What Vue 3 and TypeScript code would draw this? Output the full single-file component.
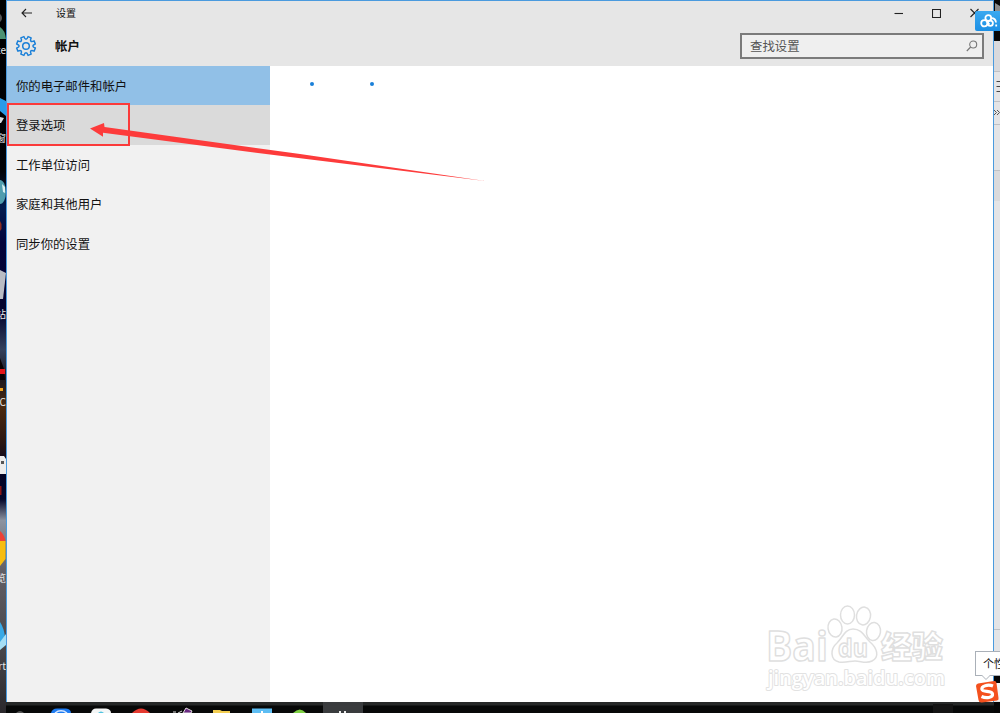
<template>
  <div class="desktop">
    <!-- Desktop strips that show on both sides of the window -->
    <svg class="strip strip-left" width="6" height="713" viewBox="0 0 6 713">
      <defs>
        <linearGradient id="wallpaper" x1="0" y1="0" x2="0" y2="1">
          <stop offset="0" stop-color="#000000" />
          <stop offset="0.24" stop-color="#020308" />
          <stop offset="0.29" stop-color="#031c50" />
          <stop offset="0.34" stop-color="#03033c" />
          <stop offset="0.44" stop-color="#05052f" />
          <stop offset="0.49" stop-color="#33405c" />
          <stop offset="0.53" stop-color="#1c1820" />
          <stop offset="0.57" stop-color="#4b2a10" />
          <stop offset="0.62" stop-color="#2b1712" />
          <stop offset="0.66" stop-color="#030324" />
          <stop offset="0.7" stop-color="#04062a" />
          <stop offset="0.73" stop-color="#8c93a0" />
          <stop offset="0.8" stop-color="#625f66" />
          <stop offset="0.9" stop-color="#4b484c" />
          <stop offset="1" stop-color="#2a282c" />
        </linearGradient>
      </defs>
      <rect width="6" height="713" fill="url(#wallpaper)" />
      <circle cx="-3" cy="18" r="5" fill="#555" />
      <path d="M0 27 Q5 30 6 39 H0Z" fill="#4c9272" />
      <path d="M0 98 L6 101 V116 L0 111Z" fill="#299be8" />
      <path d="M0 117 L4 118 L1 123 H0Z" fill="#d8dde2" />
      <ellipse cx="0" cy="192" rx="6" ry="12" fill="#4f9dae" />
      <path d="M2 184 L5 187 V193 L3 192Z" fill="#d9f0f2" />
      <path d="M0 221 L1.5 224 V229 L0 231Z" fill="#8c2b20" />
      <path d="M0 270 L6 273 L3 299 H0Z" fill="#b9bcc4" />
      <path d="M0 358 L4 369 L5 380 H0Z" fill="#0a0204" />
      <rect y="369" width="5" height="5" fill="#e3161a" />
      <rect y="388" width="3" height="3" fill="#f1a21b" />
      <path d="M0 456 H4 L6 459 V474 H0Z" fill="#ececec" />
      <rect x="1" y="461" width="3" height="3" fill="#555" />
      <rect y="486" width="1.5" height="9" fill="#8a1513" />
      <path d="M0 531 Q4 534 5.5 541 H0Z" fill="#ee4136" />
      <path d="M0 541 H5.5 V559 L0 566Z" fill="#f6bd11" />
      <path d="M0 622 Q4 628 5 637 L0 650Z" fill="#39a9e6" />
      <path d="M0 642 L6 634 V645 L0 650Z" fill="#a5def5" />
    </svg>
    <span
      v-for="label in iconLabels"
      :key="label.top"
      class="icon-label"
      :style="{ top: label.top + 'px' }"
    >{{ label.text }}</span>

    <svg class="strip strip-right" width="6" height="713" viewBox="0 0 6 713">
      <rect width="6" height="713" fill="#e4e4e6" />
      <rect width="6" height="41" fill="#070707" />
      <path d="M1 3 L6 6 V11 H1Z" fill="#8b8b8b" />
      <rect y="41" width="6" height="30" fill="#d9d9dc" />
      <path d="M0 71.5H6M0 101.5H6M0 124.5H6M0 170.5H6M0 629.5H6" stroke="#bfc1c5" />
      <path d="M2.5 81.5H6M2.5 86.5H6M2.5 91.5H6" stroke="#444" />
      <path d="M0 110 L2.5 112.5 L0 115M3 110 L5.5 112.5 L3 115" fill="none" stroke="#555" />
      <rect y="171" width="6" height="30" fill="#dadadc" />
      <rect y="676" width="6" height="7" fill="#050505" />
      <rect y="683" width="6" height="18" fill="#f6f6f6" />
      <rect y="702" width="6" height="11" fill="#050505" />
    </svg>

    <div class="window">
      <header class="window-header">
        <div class="title-bar">
          <svg class="back-icon" width="12" height="10" viewBox="0 0 12 10">
            <path d="M11 5H1M5 1L1 5L5 9" />
          </svg>
          <span class="window-title">设置</span>
          <div class="window-controls">
            <svg width="9" height="10" viewBox="0 0 9 10"><path d="M0.5 5.5H9" /></svg>
            <svg width="9" height="10" viewBox="0 0 9 10"><path d="M0.5 1.5H8.5V9.5H0.5Z" /></svg>
            <svg width="9" height="10" viewBox="0 0 9 10"><path d="M0.5 1L8.5 9M8.5 1L0.5 9" /></svg>
          </div>
        </div>
        <div class="page-bar">
          <svg class="gear-icon" width="22" height="22" viewBox="-11 -11 22 22">
            <path :d="gearPath" />
            <circle r="3.3" />
          </svg>
          <span class="page-title">帐户</span>
          <div class="search-box">
            <span>查找设置</span>
            <svg width="12" height="12" viewBox="0 0 12 12">
              <circle cx="7.2" cy="4.5" r="3.5" />
              <path d="M4.7 7L0.8 11" />
            </svg>
          </div>
        </div>
      </header>

      <div class="window-body">
        <nav class="sidebar">
          <div
            v-for="item in menuItems"
            :key="item.label"
            class="menu-item"
            :class="item.state"
          >{{ item.label }}</div>
        </nav>
        <main class="content">
          <i class="loading-dot"></i>
          <i class="loading-dot"></i>
        </main>
      </div>
    </div>

    <footer class="taskbar">
      <svg width="1000" height="11" viewBox="0 0 1000 11">
        <rect x="6" width="988" height="3.5" fill="#262828" />
        <rect x="323" width="40" height="11" fill="#3a3c3e" />
        <rect x="933" y="2" width="20" height="9" fill="#141414" />
        <path d="M16 11 Q20 7 24 11Z" fill="#555" />
        <path d="M51 11 Q52 6.5 57 6.5 H66 Q71 7 71 11Z" fill="#1e7cf2" />
        <path d="M55 11 Q61 6.5 67 11" fill="none" stroke="#dceaff" stroke-width="1.5" />
        <path d="M91 11 Q92 6.5 96 6.5 H106 Q111 7 111 11Z" fill="#f4f6f6" />
        <path d="M98 11 Q101 8 104 11Z" fill="#4ec3e0" />
        <path d="M132 11 Q141 2 150 11Z" fill="#e53a30" />
        <path d="M173 10 H176M178 11 L182 9" stroke="#ddd" />
        <path d="M183 11 L186 6 L192 9 L191 11Z" fill="#6b2a83" stroke="#ddd" />
        <path d="M213 11 V8 H220 L222 9 H230 V11Z" fill="#f2cd50" />
        <rect x="252" y="6.5" width="20" height="5" fill="#5dbdf3" />
        <path d="M262 9V11" stroke="#fff" stroke-width="2" />
        <path d="M293 11 Q300 4 306 11Z" fill="#7ed044" />
        <path d="M340 9V11M345 9V11" stroke="#eee" stroke-width="2" />
      </svg>
    </footer>

    <!-- Red marker around the sign-in option and the arrow to it -->
    <div class="marker-box"></div>
    <svg class="marker-arrow" width="400" height="70" viewBox="88 118 400 70">
      <path d="M90 128.5L104 123L104.5 127L300 154L485 181L280 155.8L103 132.7L103 136.7Z" />
    </svg>

    <svg class="watermark" width="190" height="95" viewBox="762 600 190 95">
      <g class="watermark-shape">
        <text x="766" y="661" font-size="41" font-weight="700" textLength="62" lengthAdjust="spacingAndGlyphs">Bai</text>
        <ellipse cx="835" cy="628" rx="7" ry="9" transform="rotate(-8 835 628)" />
        <ellipse cx="847.5" cy="615" rx="7" ry="9" />
        <ellipse cx="863.5" cy="616" rx="7" ry="9" transform="rotate(10 863.5 616)" />
        <ellipse cx="873.5" cy="631.5" rx="7" ry="9" transform="rotate(8 873.5 631.5)" />
        <path d="M853 629C845 629 843 637 837 643C830 649 830 660 839 662C846 663 850 661 855 661C861 661 866 664 872 661C880 657 877 648 870 642C864 636 862 629 853 629Z" />
        <text x="838" y="657" font-size="25" font-weight="700" textLength="30" lengthAdjust="spacingAndGlyphs">du</text>
        <text class="watermark-cjk" x="881" y="658" font-size="31" font-weight="900" textLength="62">经验</text>
        <text class="watermark-url" x="768" y="685" font-size="20.5" textLength="177" lengthAdjust="spacingAndGlyphs">jingyan.baidu.com</text>
      </g>
    </svg>

    <div class="cloud-badge">
      <svg width="18" height="14" viewBox="0 0 18 14">
        <circle cx="4.3" cy="9.3" r="3.1" />
        <circle cx="8.3" cy="4" r="2.9" />
        <path d="M6.5 6.8L9.5 10.5" />
        <circle cx="10.3" cy="9.3" r="2.6" />
        <path d="M11 4.2Q15.500 4 16 8.5M16.200 10.500V12.500" />
      </svg>
    </div>

    <div class="ime-tip">个性</div>
    <svg class="ime-pointer" width="10" height="6" viewBox="0 0 10 6">
      <path d="M0.5 0L5 4.5L9.5 0" />
    </svg>
    <svg class="ime-logo" width="25" height="25" viewBox="0 0 25 25">
      <path d="M1 6Q1 4 3 3.5L19 1Q21 0.5 21.5 3L23.5 18Q24 20 22 20.5L7 22.5Q4 23 3.5 20Z" fill="#f4511e" />
      <path d="M18 6C13 4 6 6 7 9.5C8 12.5 17 10 17.5 14C18 18 11 18.5 6.5 16.5" fill="none" stroke="#fff" stroke-width="3.2" />
    </svg>
  </div>
</template>

<script setup lang="ts">
import { computed } from 'vue'

interface MenuItem {
  label: string
  state?: 'is-active' | 'is-hover'
}

interface IconLabel {
  text: string
  top: number
}

const menuItems: MenuItem[] = [
  { label: '你的电子邮件和帐户', state: 'is-active' },
  { label: '登录选项', state: 'is-hover' },
  { label: '工作单位访问' },
  { label: '家庭和其他用户' },
  { label: '同步你的设置' }
]

// Only the last few pixels of each desktop icon name are visible
const iconLabels: IconLabel[] = [
  { text: 'te', top: 43 },
  { text: '窗', top: 131 },
  { text: '站', top: 307 },
  { text: 'C', top: 395 },
  { text: '览', top: 571 },
  { text: 'rt', top: 659 }
]

const polar = (radius: number, degrees: number) => {
  const angle = (degrees * Math.PI) / 180
  return `${(radius * Math.cos(angle)).toFixed(2)} ${(radius * Math.sin(angle)).toFixed(2)}`
}

// Eight teeth with rounded valleys between them
const gearPath = computed(() => {
  let d = ''
  for (let i = 0; i < 8; i++) {
    const mid = i * 45 + 22.5
    d += `${i === 0 ? 'M' : 'L'}${polar(9.6, mid - 10)}L${polar(9.6, mid + 10)}`
    d += `C${polar(6.1, mid + 13)} ${polar(6.1, mid + 32)} ${polar(9.6, mid + 35)}`
  }
  return d + 'Z'
})
</script>

<style>
body {
  margin: 0;
  overflow: hidden;
}
</style>

<style scoped>
.desktop {
  position: relative;
  width: 1000px;
  height: 713px;
  overflow: hidden;
  background: #050505;
  font-family: "Noto Sans CJK SC", sans-serif;
  color: #111;
}

.strip {
  position: absolute;
  top: 0;
}

.strip-left {
  left: 0;
}

.strip-right {
  right: 0;
}

.icon-label {
  position: absolute;
  right: 994px;
  font-size: 10px;
  line-height: 14px;
  color: #e6e6e6;
  white-space: nowrap;
}

.window {
  position: relative;
  box-sizing: border-box;
  display: flex;
  flex-direction: column;
  height: 702px;
  margin: 0 6px;
  border: 1px solid #4a9ade;
  border-bottom: none;
  background: #fff;
}

.window-header {
  height: 65px;
  background: #e6e6e6;
}

.title-bar {
  display: flex;
  align-items: center;
  height: 24px;
  padding: 0 14px;
}

.back-icon,
.window-controls svg {
  fill: none;
  stroke: #222;
  stroke-width: 1.1;
}

.window-title {
  margin-left: 23px;
  font-size: 10px;
  line-height: 24px;
}

.window-controls {
  display: flex;
  gap: 29px;
  margin-left: auto;
}

.page-bar {
  display: flex;
  align-items: center;
  height: 41px;
  padding: 0 9px 0 8px;
}

.gear-icon {
  fill: none;
  stroke: #1b80d8;
  stroke-width: 1.5;
  stroke-linejoin: round;
}

.page-title {
  margin-left: 18px;
  font-size: 12.4px;
  font-weight: 700;
}

.search-box {
  box-sizing: border-box;
  display: flex;
  align-items: center;
  justify-content: space-between;
  width: 244px;
  height: 26px;
  margin-left: auto;
  padding: 0 4px 0 8px;
  border: 2px solid #7b7b7b;
  background: #efefef;
  font-size: 12.4px;
  line-height: 20px;
  color: #555;
}

.search-box svg {
  fill: none;
  stroke: #777;
  stroke-width: 1.1;
}

.window-body {
  flex: 1;
  display: flex;
}

.sidebar {
  width: 263px;
  background: #f1f1f1;
}

.menu-item {
  height: 39.5px;
  padding-left: 9px;
  font-size: 12.35px;
  line-height: 40px;
}

.menu-item.is-active {
  height: 39.3px;
  background: #91c0e7;
}

.menu-item.is-hover {
  background: #dadada;
}

.content {
  flex: 1;
  display: flex;
  gap: 56px;
  padding: 16px 0 0 40px;
}

.loading-dot {
  width: 4px;
  height: 4px;
  border-radius: 50%;
  background: #1a80d9;
}

.taskbar {
  height: 11px;
  background: #070808;
}

.taskbar svg {
  display: block;
}

.marker-box {
  position: absolute;
  box-sizing: border-box;
  top: 103px;
  left: 7px;
  width: 123px;
  height: 42.5px;
  border: 2px solid #fb3a3a;
}

.marker-arrow {
  position: absolute;
  top: 118px;
  left: 88px;
  fill: #fd3b3b;
}

.watermark {
  position: absolute;
  top: 600px;
  left: 762px;
  font-family: "Open Sans", "Noto Sans", sans-serif;
}

.watermark-shape {
  fill: #fff;
  stroke: #dfdfdf;
  stroke-width: 1.5;
  stroke-linejoin: round;
}

.watermark-cjk {
  font-family: "Noto Sans CJK SC", sans-serif;
}

.watermark-url {
  font-weight: 600;
  stroke: #e2e2e2;
  stroke-width: 2;
  paint-order: stroke;
}

.cloud-badge {
  position: absolute;
  top: 11px;
  left: 975px;
  display: flex;
  align-items: center;
  justify-content: center;
  width: 27px;
  height: 20px;
  border-radius: 2px;
  background: linear-gradient(#3ba9f0, #1b8fe4);
}

.cloud-badge svg {
  fill: none;
  stroke: #fff;
  stroke-width: 1.8;
}

.ime-tip {
  position: absolute;
  box-sizing: border-box;
  top: 651px;
  left: 975px;
  width: 40px;
  height: 25px;
  padding-left: 7px;
  border: 1px solid #aab0b8;
  background: #fff;
  font-size: 11px;
  line-height: 23px;
  white-space: nowrap;
}

.ime-pointer {
  position: absolute;
  top: 675px;
  left: 981px;
  fill: #fff;
  stroke: #aab0b8;
}

.ime-logo {
  position: absolute;
  top: 680px;
  left: 975px;
}
</style>
